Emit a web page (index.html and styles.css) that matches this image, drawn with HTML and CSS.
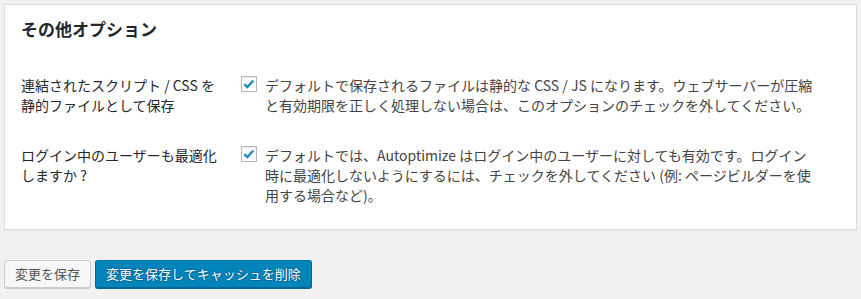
FILE: index.html
```html
<!DOCTYPE html>
<html lang="ja">
<head>
    <meta charset="UTF-8">
    <meta name="viewport" content="width=device-width, initial-scale=1.0">
    <title>その他オプション</title>
    <link rel="stylesheet" href="styles.css">
</head>
<body>
    <div class="postbox">
        <h2 class="hndle">その他オプション</h2>

        <div class="form-table">
            <div class="row">
                <div class="th">連結されたスクリプト / CSS を静的ファイルとして保存</div>
                <div class="td">
                    <span class="checkbox checked">
                        <svg viewBox="0 0 16 16" width="16" height="16"><path d="M3.4 8.1l3 3 6-6.6" fill="none" stroke="#1e8cbe" stroke-width="2.4" stroke-linecap="butt"/></svg>
                    </span>
                    <p class="description">デフォルトで保存されるファイルは静的な CSS / JS になります。ウェブサーバーが圧縮と有効期限を正しく処理しない場合は、このオプションのチェックを外してください。</p>
                </div>
            </div>
            <div class="row">
                <div class="th">ログイン中のユーザーも最適化しますか ?</div>
                <div class="td">
                    <span class="checkbox checked">
                        <svg viewBox="0 0 16 16" width="16" height="16"><path d="M3.4 8.1l3 3 6-6.6" fill="none" stroke="#1e8cbe" stroke-width="2.4" stroke-linecap="butt"/></svg>
                    </span>
                    <p class="description">デフォルトでは、Autoptimize はログイン中のユーザーに対しても有効です。ログイン時に最適化しないようにするには、チェックを外してください (例: ページビルダーを使用する場合など)。</p>
                </div>
            </div>
        </div>
    </div>

    <div class="submit">
        <button class="button">変更を保存</button>
        <button class="button button-primary">変更を保存してキャッシュを削除</button>
    </div>
</body>
</html>
```

FILE: styles.css
```css
body {
    margin: 0;
    padding: 4px;
    background: #f1f1f1;
    font-family: "Noto Sans CJK JP", "Noto Sans", sans-serif;
    font-size: 14px;
    color: #444;
}

.postbox {
    background: #fff;
    border: 1px solid #dcdcdc;
    box-shadow: 0 1px 1px rgba(0, 0, 0, .04);
    padding: 12px 16px 9px;
}

.hndle {
    margin: 0 0 19px;
    font-size: 17px;
    line-height: 24px;
    font-weight: bold;
    color: #23282d;
}

.row {
    display: grid;
    grid-template-columns: 220px 1fr;
}

.th {
    padding: 15px 16px 15px 0;
    line-height: 20px;
    color: #23282d;
}

.td {
    display: flex;
    align-items: flex-start;
    padding: 15px 24px 15px 0;
}

.checkbox {
    flex: none;
    width: 14px;
    height: 14px;
    margin: 1px 8px 0 0;
    border: 1px solid #b4b9be;
    background: #fff;
    box-shadow: inset 0 1px 2px rgba(0, 0, 0, .1);
    position: relative;
}

.checkbox svg {
    position: absolute;
    left: -1px;
    top: -1px;
}

.description {
    margin: 0;
    line-height: 20px;
    color: #444;
}

.submit {
    display: flex;
    gap: 4px;
    margin-top: 30px;
}

.button {
    height: 28px;
    padding: 0 10px 1px;
    font-family: inherit;
    font-size: 13px;
    line-height: 26px;
    border: 1px solid #ccc;
    border-radius: 3px;
    background: #f7f7f7;
    color: #555;
    box-shadow: 0 1px 0 #ccc;
    cursor: pointer;
}

.button-primary {
    background: #0085ba;
    border-color: #0073aa #006799 #006799;
    color: #fff;
    box-shadow: 0 1px 0 #006799;
    text-shadow: 0 -1px 1px #006799, 1px 0 1px #006799, 0 1px 1px #006799, -1px 0 1px #006799;
}
```
